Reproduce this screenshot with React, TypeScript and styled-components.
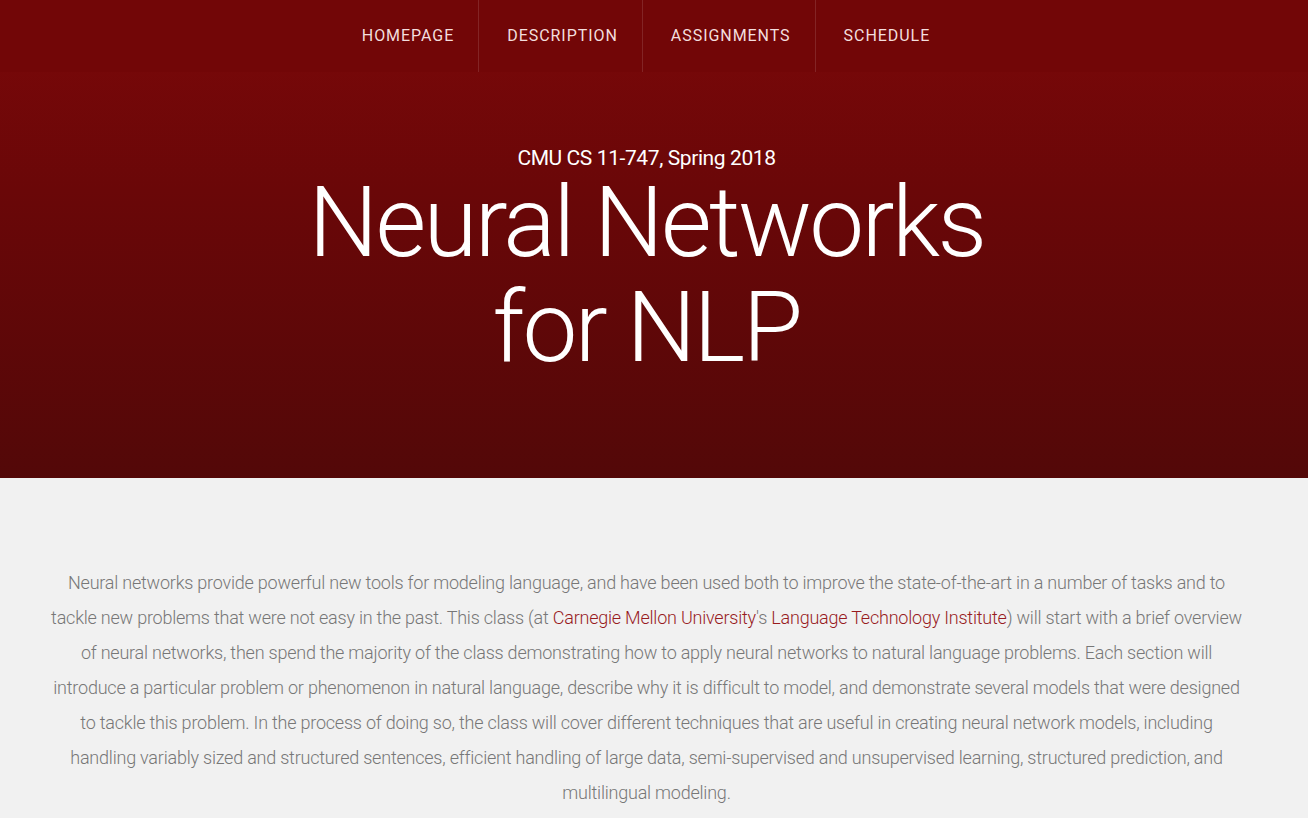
import React from "react";
import styled, { createGlobalStyle } from "styled-components";

const GlobalStyle = createGlobalStyle`
  html, body {
    margin: 0;
    padding: 0;
    background: #f1f1f1;
    font-family: Roboto, "Liberation Sans", sans-serif;
  }
  * { box-sizing: border-box; }
`;

const Hero = styled.header`
  height: 478px;
  background: linear-gradient(to bottom, #7c0809 0%, #6a0708 40%, #530808 100%);
  display: flex;
  flex-direction: column;
`;

const NavBar = styled.nav`
  height: 72px;
  background: #720607;
  display: flex;
  justify-content: center;
  padding-right: 21px;
`;

const NavItem = styled.a<{ $first?: boolean }>`
  display: flex;
  align-items: center;
  padding: 0 24px 2px 28px;
  height: 100%;
  color: #f3dede;
  font-family: Roboto, sans-serif;
  font-size: 16px;
  letter-spacing: 0.95px;
  text-decoration: none;
  text-transform: uppercase;
  border-left: 1px solid ${(p) => (p.$first ? "transparent" : "rgba(255,255,255,0.12)")};
`;

const HeroBody = styled.div`
  flex: 1;
  display: flex;
  flex-direction: column;
  align-items: center;
  padding: 74px 15px 0 0;
  color: #fff;
  text-align: center;
`;

const Subtitle = styled.div`
  font-family: Roboto, sans-serif;
  font-size: 21px;
  font-weight: 400;
  line-height: 24px;
  letter-spacing: -0.4px;
`;

const Title = styled.h1`
  margin: 0;
  font-family: Roboto, sans-serif;
  font-weight: 300;
  font-size: 98px;
  line-height: 105px;
  letter-spacing: -2.6px;
`;

const Content = styled.main`
  padding: 87px 15px 40px 0;
  display: flex;
  justify-content: center;
`;

const Paragraph = styled.p`
  margin: 0;
  max-width: 1200px;
  text-align: center;
  font-family: Roboto, sans-serif;
  font-weight: 300;
  font-size: 18px;
  line-height: 35px;
  letter-spacing: -0.22px;
  color: #777777;
`;

const Link = styled.a`
  color: #981b1e;
  text-decoration: none;
`;

const navItems = ["Homepage", "Description", "Assignments", "Schedule"];

export default function App() {
  return (
    <>
      <GlobalStyle />
      <Hero>
        <NavBar>
          {navItems.map((n, i) => (
            <NavItem key={n} href="#" $first={i === 0}>
              {n}
            </NavItem>
          ))}
        </NavBar>
        <HeroBody>
          <Subtitle>CMU CS 11-747, Spring 2018</Subtitle>
          <Title>
            Neural Networks
            <br />
            for NLP
          </Title>
        </HeroBody>
      </Hero>
      <Content>
        <Paragraph>
          Neural networks provide powerful new tools for modeling language, and have been used both
          to improve the state-of-the-art in a number of tasks and to tackle new problems that were
          not easy in the past. This class (at <Link href="#">Carnegie Mellon University</Link>'s{" "}
          <Link href="#">Language Technology Institute</Link>) will start with a brief overview of
          neural networks, then spend the majority of the class demonstrating how to apply neural
          networks to natural language problems. Each section will introduce a particular problem or
          phenomenon in natural language, describe why it is difficult to model, and demonstrate
          several models that were designed to tackle this problem. In the process of doing so, the
          class will cover different techniques that are useful in creating neural network models,
          including handling variably sized and structured sentences, efficient handling of large
          data, semi-supervised and unsupervised learning, structured prediction, and multilingual
          modeling.
        </Paragraph>
      </Content>
    </>
  );
}
